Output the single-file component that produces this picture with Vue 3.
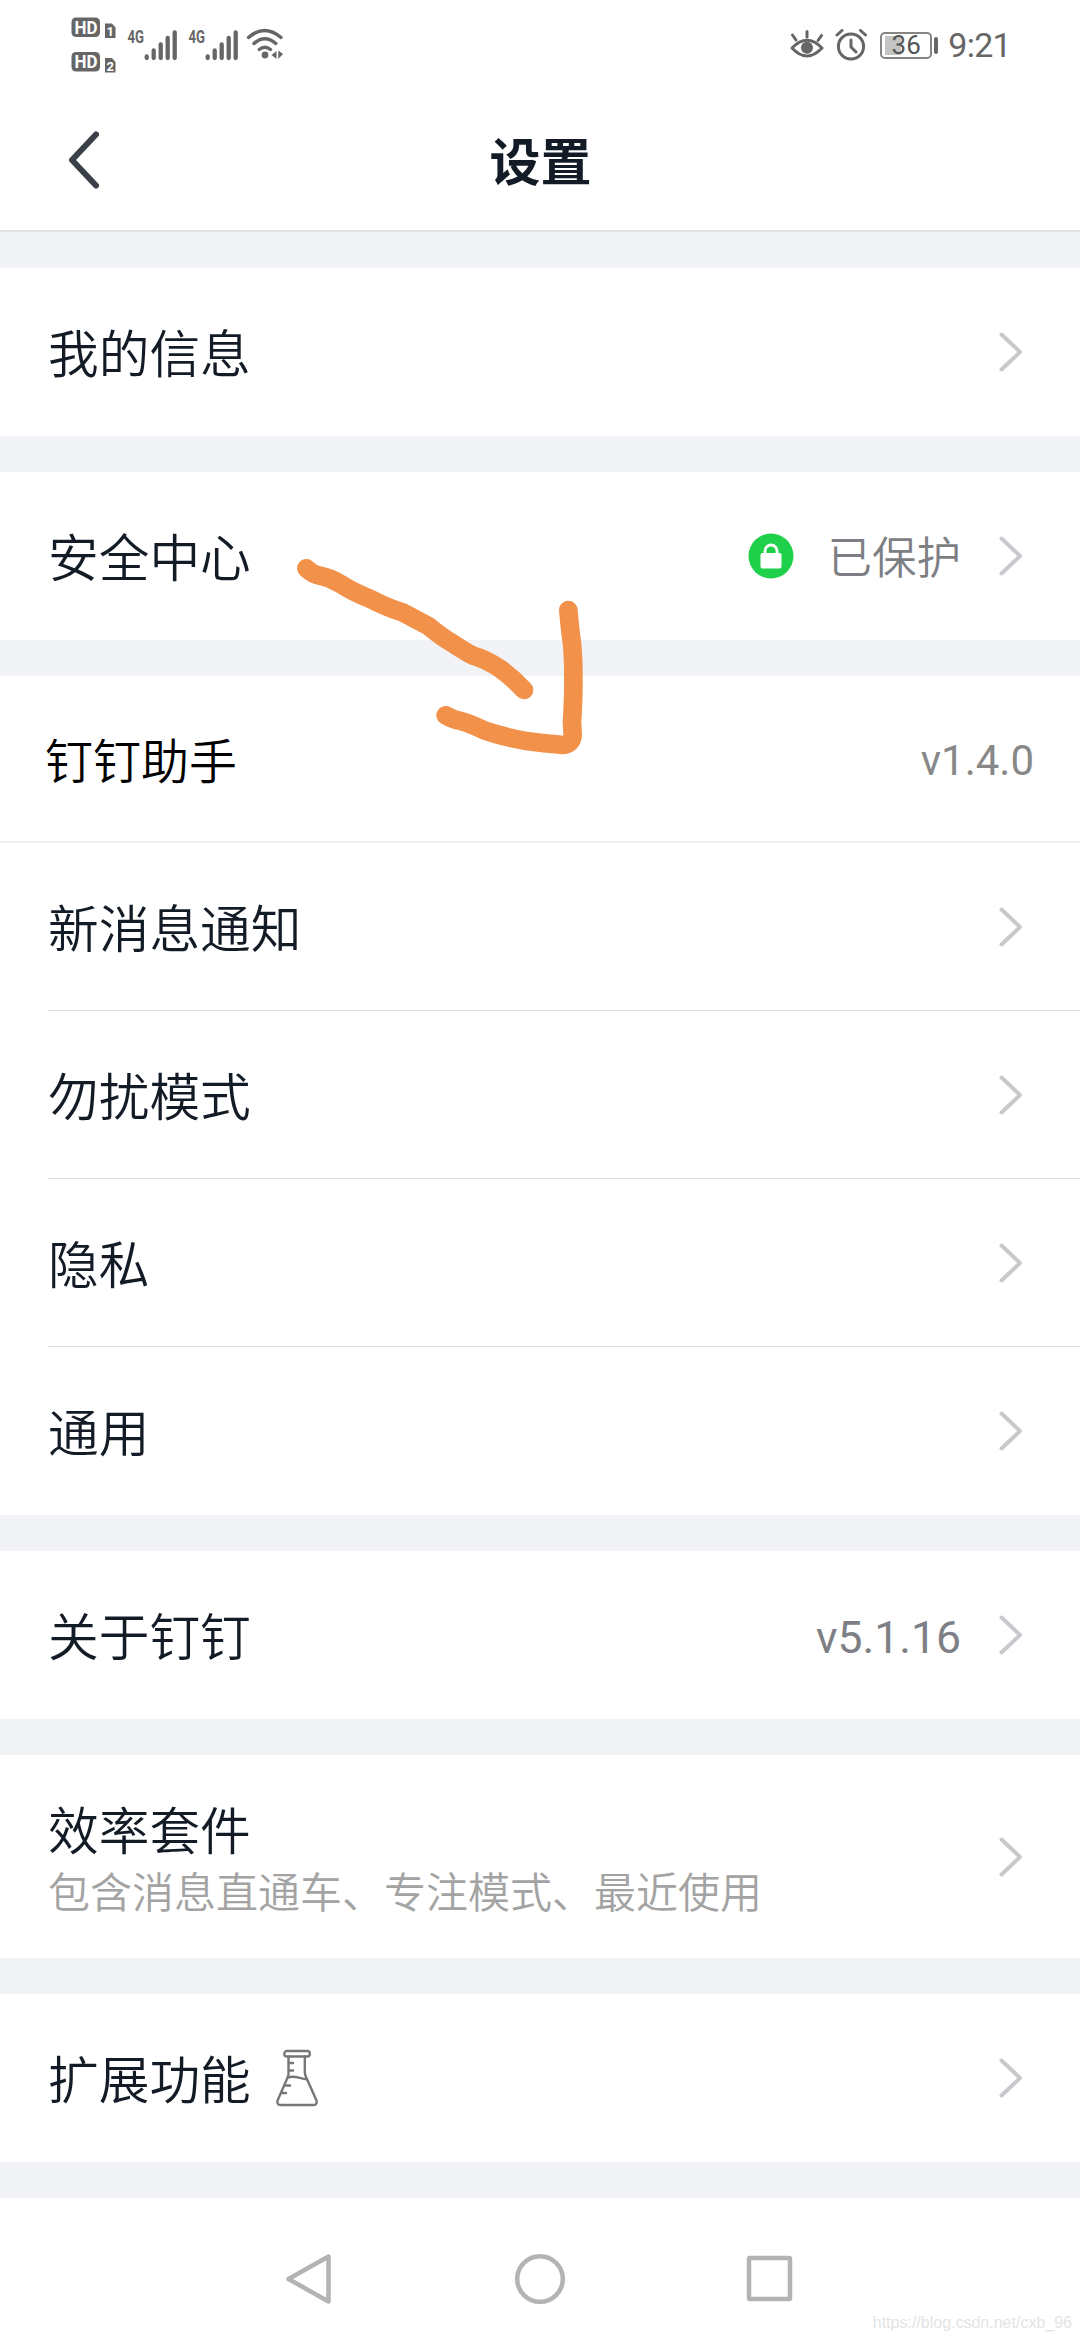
<template>
  <div class="page">
    <!-- 状态栏 -->
    <div class="status-bar">
      <div class="status-left">
        <svg class="hd" viewBox="0 0 46 58" width="46" height="58">
          <g v-for="n in 2" :key="n" :transform="`translate(0 ${(n - 1) * 34.5})`">
            <rect x="0.5" y="0.5" width="28.5" height="19.5" rx="4.5" fill="#666" />
            <text x="3.5" y="16.5" class="hd-text" textLength="23" lengthAdjust="spacingAndGlyphs">HD</text>
            <path d="M34 6.5h7l3.5 4v10.500h-10.5z" fill="#666" />
            <text x="39.2" y="19" class="sim-text" text-anchor="middle">{{ n }}</text>
          </g>
        </svg>
        <svg v-for="n in 2" :key="n" class="signal" viewBox="0 0 52 38" width="52" height="38">
          <text x="1.500" y="19" class="net-text" textLength="16.5" lengthAdjust="spacingAndGlyphs">4G</text>
          <path
            d="M20.7 32.500v1.5M27.7 26.500v7.5M34.7 20.500v13.5M41.7 14v20M48.7 8.500v25.500"
            stroke="#666"
            stroke-width="4.3"
            stroke-linecap="round"
          />
        </svg>
        <svg class="wifi" viewBox="0 0 38 32" width="38" height="32">
          <g fill="none" stroke="#666" stroke-width="3.4" stroke-linecap="round">
            <path d="M2.5 9.5Q18.500 -4.500 35 9.500" />
            <path d="M8 15.500Q18.700 6 29.800 15.500" />
            <path d="M13.200 21.500Q18.800 17 24.500 21.500" />
          </g>
          <circle cx="19" cy="27" r="3.400" fill="#666" />
          <path d="M30.500 23v8l-5-4zM32.300 22.500l4.700 3.500-4.700 5z" fill="#666" />
        </svg>
      </div>
      <div class="status-right">
        <svg viewBox="0 0 34 32" width="34" height="32">
          <g fill="none" stroke="#666" stroke-width="3" stroke-linecap="round">
            <path d="M2 19Q17 3.500 32 19Q17 35 2 19z" stroke-linejoin="round" />
            <path d="M2.500 6l3.500 5M17 2.500v5.500M31.500 6.500l-3.500 5" />
          </g>
          <circle cx="17" cy="18.700" r="6" fill="#666" />
        </svg>
        <svg class="alarm" viewBox="0 0 32 32" width="32" height="32">
          <g fill="none" stroke="#666" stroke-width="3" stroke-linecap="round" stroke-linejoin="round">
            <circle cx="16" cy="17.500" r="12.600" />
            <path d="M16 11v7l5 5M2 6l5-4.500M25.500 1.500l5 4.500" />
          </g>
        </svg>
        <div class="battery">
          <span class="battery-fill" :style="{ width: battery * 0.44 + 'px' }"></span>
          <span class="battery-num">{{ battery }}</span>
        </div>
        <span class="battery-tip"></span>
        <span class="time">9:21</span>
      </div>
    </div>

    <!-- 标题栏 -->
    <header class="nav-header">
      <svg class="back" viewBox="0 0 34 58" width="34" height="58">
        <path d="M29 3.500L5 29L29 54.500" />
      </svg>
      <h1>设置</h1>
    </header>

    <!-- 设置列表 -->
    <section v-for="(group, i) in groups" :key="i" class="group">
      <div v-for="item in group" :key="item.title" class="row" :class="item.type">
        <div class="label">
          <div class="title">{{ item.title }}</div>
          <div v-if="item.desc" class="desc">{{ item.desc }}</div>
        </div>
        <svg v-if="item.flask" class="flask" viewBox="0 0 42 58" width="42" height="58">
          <g fill="none" stroke="#777" stroke-width="2.400" stroke-linecap="round" stroke-linejoin="round">
            <rect x="8.300" y="2" width="25.500" height="5.500" rx="2.500" />
            <path d="M12.500 7.500v17.500c0 2-1 4-2 6L1.800 51c-1 2.500 0 5 2.500 5h33.500c2.500 0 3.500-2.500 2.500-5L30 28c-.8-1.500-1.200-3-1.200-5V7.500" />
            <path d="M12 28.500c7-2.500 12 1.500 19 1.800" />
            <path d="M13 14h4M13 21.500h4M10 36.500h4M6 44h4" />
          </g>
        </svg>
        <svg v-if="item.lock" class="lock" viewBox="0 0 46 46" width="46" height="46">
          <circle cx="23" cy="23" r="22.500" fill="#1fd04b" />
          <rect x="12.500" y="20" width="21" height="15.500" rx="2" fill="#fff" />
          <path d="M17 21v-3a6 6 0 0 1 12 0v3" fill="none" stroke="#fff" stroke-width="2.800" />
        </svg>
        <span v-if="item.value" class="value" :class="{ status: item.lock }">{{ item.value }}</span>
        <svg v-if="item.type !== 'plugin'" class="arrow" viewBox="0 0 26 42" width="26" height="42">
          <path d="M3.500 3.500L22 21L3.500 38.500" />
        </svg>
      </div>
    </section>

    <!-- 底部导航键 -->
    <footer class="sys-nav">
      <svg viewBox="0 0 52 52" width="52" height="52">
        <path d="M44.500 3.500V48.500L4.500 26z" />
      </svg>
      <svg viewBox="0 0 52 52" width="52" height="52">
        <circle cx="26" cy="26" r="22.800" />
      </svg>
      <svg viewBox="0 0 52 52" width="52" height="52">
        <rect x="5" y="5" width="41" height="41" rx="1" />
      </svg>
    </footer>

    <!-- 手绘箭头 -->
    <svg class="doodle" viewBox="0 0 1020 780" width="340" height="260">
      <path d="M109 115Q130 134 150 137Q180 143 210 161Q250 187 300 206Q345 230 400 248L475 288Q520 325 545 338Q590 368 610 377Q650 388 690 416Q730 445 762 480" />
      <path d="M895 240Q900 300 906 340Q911 400 910 440Q911 500 906 575L908 615Q906 643 878 645Q820 640 775 634Q700 621 645 602Q600 580 570 572Q550 570 527 556" />
    </svg>

    <span class="watermark">https://blog.csdn.net/cxb_96</span>
  </div>
</template>

<script setup>
import { ref } from 'vue'

const battery = ref(36)

// 列表分组
const groups = ref([
  [{ title: '我的信息' }],
  [{ title: '安全中心', value: '已保护', lock: true }],
  [
    { title: '钉钉助手', value: 'v1.4.0', type: 'plugin' },
    { title: '新消息通知' },
    { title: '勿扰模式' },
    { title: '隐私' },
    { title: '通用' }
  ],
  [{ title: '关于钉钉', value: 'v5.1.16' }],
  [{ title: '效率套件', desc: '包含消息直通车、专注模式、最近使用', type: 'tall' }],
  [{ title: '扩展功能', flask: true }]
])
</script>

<style>
body {
  margin: 0;
  background: #f2f3f6;
}
</style>

<style scoped>
.page {
  position: relative;
  display: flex;
  flex-direction: column;
  width: 1080px;
  height: 2340px;
  overflow: hidden;
  background: #f2f3f6;
  font-family: Roboto, 'Noto Sans CJK SC', sans-serif;
  color: #131c26;
}
.status-bar {
  display: flex;
  justify-content: space-between;
  height: 90px;
  box-sizing: border-box;
  padding: 17px 69px 0 71px;
  background: #fff;
}
.status-left,
.status-right {
  display: flex;
  align-items: flex-start;
}
.hd-text {
  font: 700 18.500px Roboto, sans-serif;
  fill: #fff;
}
.sim-text {
  font: 700 13px Roboto, sans-serif;
  fill: #fff;
}
.signal {
  margin: 7px 0 0 9px;
  overflow: visible;
}
.net-text {
  font: 700 19px Roboto, sans-serif;
  fill: #666;
}
.wifi {
  margin: 11px 0 0 7px;
}
.status-right {
  height: 56px;
  align-items: center;
}
.alarm {
  margin-left: 11px;
}
.battery {
  display: flex;
  align-items: center;
  position: relative;
  box-sizing: border-box;
  width: 52px;
  height: 27px;
  margin-left: 13px;
  padding: 2px 3px;
  border: 2px solid #858585;
  border-radius: 5px;
}
.battery-fill {
  height: 19px;
  background: #c4c4c4;
}
.battery-num {
  position: absolute;
  left: 0;
  width: 48px;
  text-align: center;
  font-size: 26px;
  line-height: 26px;
  color: #555;
}
.battery-tip {
  width: 4px;
  height: 17px;
  margin-left: 2px;
  border-radius: 2px;
  background: #666;
}
.time {
  margin-left: 10px;
  font-size: 34px;
  line-height: 56px;
  letter-spacing: -0.700px;
  color: #666;
}
.nav-header {
  display: flex;
  align-items: center;
  height: 140px;
  margin-bottom: 36px;
  padding: 0 67px;
  border-bottom: 2px solid #dfe0e2;
  background: #fff;
}
.back {
  fill: none;
  stroke: #3a4048;
  stroke-width: 6;
  stroke-linecap: round;
  stroke-linejoin: round;
}
h1 {
  flex: 1;
  margin: 8px 33px 0 0;
  text-align: center;
  font-size: 51px;
  line-height: 60px;
  font-weight: 700;
}
.group {
  margin-bottom: 36px;
  background: #fff;
}
.row {
  display: flex;
  align-items: center;
  box-sizing: border-box;
  height: 168px;
  padding: 0 56px 0 48px;
}
.row + .row:not(:last-child) {
  background: linear-gradient(#dcdee0, #dcdee0) 48px 100% / 100% 1px no-repeat;
}
.label {
  margin-right: auto;
  padding-top: 8px;
}
.title {
  font-size: 50.700px;
  line-height: 60px;
  font-weight: 350;
}
.desc {
  margin-top: 3px;
  font-size: 42px;
  line-height: 56px;
  font-weight: 350;
  color: #a3a3a3;
}
.row.tall {
  height: 203px;
}
.tall .label {
  padding-top: 11px;
}
.row.plugin {
  height: 167px;
  padding: 0 46px 0 45px;
  border-bottom: 2px solid #f0f1f3;
}
.row.plugin .title {
  font-size: 48px;
  color: #000;
}
.row.plugin .value {
  margin-right: 0;
  font-size: 42px;
  color: #888;
}
.value {
  margin-right: 37px;
  padding-top: 5px;
  font-size: 44.500px;
  line-height: 60px;
  color: #7d7f84;
}
.value.status {
  font-weight: 350;
}
.lock {
  margin-right: 33px;
}
.flask {
  margin: 0 auto 0 0;
}
.label:has(+ .flask) {
  margin-right: 25px;
}
.arrow {
  fill: none;
  stroke: #c8c9cc;
  stroke-width: 4;
  stroke-linecap: round;
  stroke-linejoin: round;
}
.sys-nav {
  display: flex;
  justify-content: center;
  align-items: center;
  gap: 178px;
  flex: 1;
  padding-top: 20px;
  background: #fff;
}
.sys-nav svg {
  fill: none;
  stroke: #b3b3b3;
  stroke-width: 4.500;
  stroke-linejoin: round;
}
.doodle {
  position: absolute;
  left: 270px;
  top: 530px;
  fill: none;
  stroke: #f1914a;
  stroke-width: 56;
  stroke-linecap: round;
  stroke-linejoin: round;
}
.watermark {
  position: absolute;
  right: 8px;
  bottom: 7px;
  font: 16px/20px 'Liberation Sans', sans-serif;
  color: #e4e4e4;
}
</style>
